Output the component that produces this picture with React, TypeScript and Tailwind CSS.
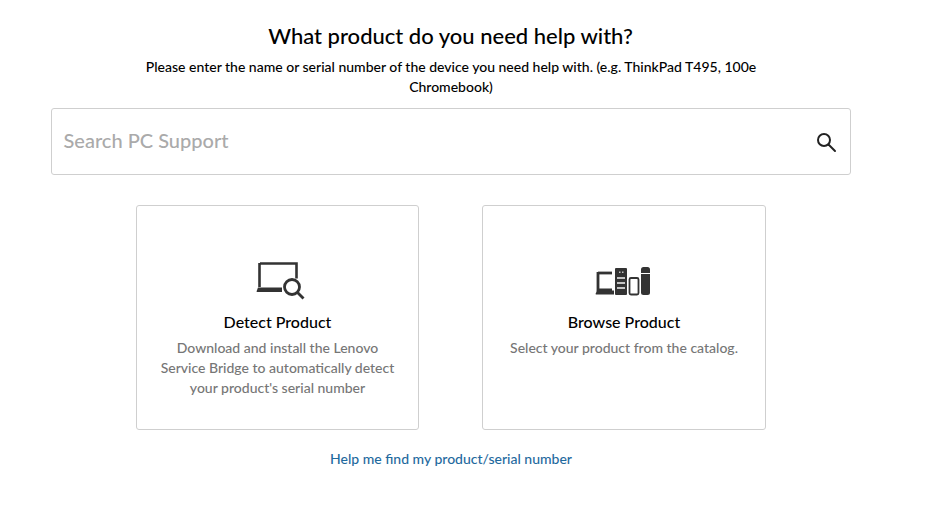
export default function App() {
  return (
    <div className="w-[947px] h-[516px] bg-white overflow-hidden font-['Lato',sans-serif] flex flex-col items-center">
      <div className="w-[800px] ml-[-46px] flex flex-col items-center">
        <h1 className="mt-[21px] text-[22px] leading-[30px] font-medium text-black text-center">What product do you need help with?</h1>
        <p className="mt-[6px] ml-[1px] w-[680px] text-[14px] leading-[20px] text-black text-center font-medium">Please enter the name or serial number of the device you need help with. (e.g. ThinkPad T495, 100e Chromebook)</p>
        <div className="mt-[11px] w-[800px] h-[67px] border border-[#cfcfcf] rounded-[3px] flex items-center justify-between pl-[12px] pr-[13px]">
          <span className="text-[20px] leading-[24px] mb-[3px] text-[#aaaaaa] font-medium">Search PC Support</span>
          <svg width="22" height="22" viewBox="0 0 22 22" fill="none" stroke="#222" strokeWidth="2">
            <circle cx="9" cy="9" r="6" />
            <path d="M13.5 13.5 L20 20" strokeLinecap="round" />
          </svg>
        </div>
        <div className="mt-[30px] flex gap-[63px]">
          <div className="w-[283px] h-[225px] border border-[#cfcfcf] rounded-[3px] flex flex-col items-center pt-[55px]">
            <svg className="ml-[8px]" width="50" height="40" viewBox="0 0 50 40" fill="none">
              <path d="M4 2.5h36.5v15" stroke="#333" strokeWidth="2.6" />
              <path d="M3.5 2v24" stroke="#333" strokeWidth="2.6" />
              <path d="M0.5 30.5 L2 26.5 H26 V31 H1 Z" fill="#333" />
              <circle cx="36" cy="26" r="7.5" stroke="#333" strokeWidth="2.8" />
              <path d="M41.5 31.5 L47.5 37.5" stroke="#333" strokeWidth="2.8" />
            </svg>
            <div className="mt-[9px] ml-[1px] text-[16px] leading-[24px] font-medium text-black">Detect Product</div>
            <div className="mt-[4px] ml-[1px] w-[240px] text-[14px] leading-[20px] text-[#767676] text-center font-medium">Download and install the Lenovo Service Bridge to automatically detect your product's serial number</div>
          </div>
          <div className="w-[284px] h-[225px] border border-[#cfcfcf] rounded-[3px] flex flex-col items-center pt-[55px]">
            <svg className="ml-[3px]" width="60" height="40" viewBox="0 0 60 40" fill="none">
              <path d="M3 12h14" stroke="#333" strokeWidth="2.8" />
              <path d="M3 11v18h14" stroke="#333" strokeWidth="2.8" />
              <path d="M0.5 33 L2 29.5 H19 V33.5 H1 Z" fill="#333" />
              <rect x="20" y="7" width="12" height="27" rx="1" fill="#333" />
              <rect x="22" y="16" width="8" height="2" fill="#c4c4c4" />
              <rect x="22" y="21" width="8" height="2" fill="#c4c4c4" />
              <rect x="22" y="26" width="8" height="2" fill="#c4c4c4" />
              <rect x="24" y="10.5" width="1.5" height="1.5" fill="#c4c4c4" />
              <rect x="27" y="10.5" width="1.5" height="1.5" fill="#c4c4c4" />
              <rect x="34.5" y="17" width="9" height="16.5" rx="1.5" stroke="#333" strokeWidth="1.8" />
              <rect x="46" y="6" width="9" height="28" rx="2.5" fill="#333" />
              <rect x="46" y="12" width="9" height="1" fill="#fff" />
            </svg>
            <div className="mt-[9px] ml-[1px] text-[16px] leading-[24px] font-medium text-black">Browse Product</div>
            <div className="mt-[4px] ml-[1px] w-[250px] text-[14px] leading-[20px] text-[#767676] text-center font-medium">Select your product from the catalog.</div>
          </div>
        </div>
        <a className="mt-[19px] ml-[1px] text-[14px] leading-[20px] text-[#1f6a9e] font-medium">Help me find my product/serial number</a>
      </div>
    </div>
  );
}
